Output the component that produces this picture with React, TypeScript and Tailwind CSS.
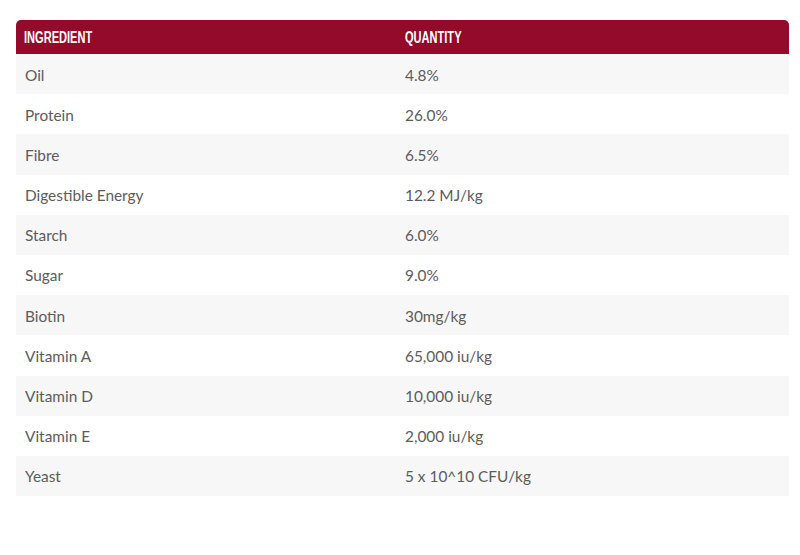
import React from "react";

const rows: [string, string][] = [
  ["Oil", "4.8%"],
  ["Protein", "26.0%"],
  ["Fibre", "6.5%"],
  ["Digestible Energy", "12.2 MJ/kg"],
  ["Starch", "6.0%"],
  ["Sugar", "9.0%"],
  ["Biotin", "30mg/kg"],
  ["Vitamin A", "65,000 iu/kg"],
  ["Vitamin D", "10,000 iu/kg"],
  ["Vitamin E", "2,000 iu/kg"],
  ["Yeast", "5 x 10^10 CFU/kg"],
];

export default function App() {
  return (
    <div className="w-[800px] h-[555px] bg-white pt-[20px] px-[16px] [font-family:'Lato','Open_Sans',sans-serif]">
      <div className="w-[773px]">
        <div className="grid grid-cols-[380px_1fr] h-[34px] items-center bg-[#930a2a] rounded-t-[5px] text-white uppercase font-bold text-[16.5px] [font-family:'Liberation_Sans',sans-serif]">
          <div className="pl-[8px]">
            <span className="inline-block origin-left scale-x-[0.67]">Ingredient</span>
          </div>
          <div className="pl-[9px]">
            <span className="inline-block origin-left scale-x-[0.67]">Quantity</span>
          </div>
        </div>
        {rows.map(([a, b], i) => (
          <div
            key={a}
            className={`grid grid-cols-[380px_1fr] h-[40.2px] items-center pt-[2px] text-[15.4px] text-[#5c5c5c] ${
              i % 2 === 0 ? "bg-[#f7f7f7]" : "bg-white"
            }`}
          >
            <div className="pl-[9px]">{a}</div>
            <div className="pl-[9px]">{b}</div>
          </div>
        ))}
      </div>
    </div>
  );
}
